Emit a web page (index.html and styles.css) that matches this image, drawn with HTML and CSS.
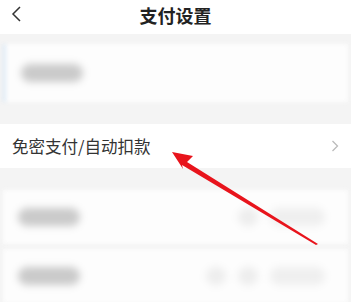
FILE: index.html
```html
<!DOCTYPE html>
<html lang="zh">
<head>
  <meta charset="UTF-8" />
  <meta name="viewport" content="width=device-width, initial-scale=1.0" />
  <title>支付设置</title>
  <link rel="stylesheet" href="styles.css">
</head>
<body>
  <div class="header">
    <svg class="back" width="12" height="16" viewBox="0 0 12 16"><path d="M9 1 L2 8 L9 15" fill="none" stroke="#333" stroke-width="1.5"/></svg>
    <h1>支付设置</h1>
  </div>

  <div class="card blurred first">
    <span class="blob"></span>
  </div>

  <div class="row">
    <span class="label">免密支付/自动扣款</span>
    <svg class="chev" width="8" height="12" viewBox="0 0 8 12"><path d="M1.5 1 L6.5 6 L1.5 11" fill="none" stroke="#bbb" stroke-width="1.3"/></svg>
  </div>

  <div class="card blurred second">
    <span class="blob"></span>
    <span class="spacer"></span>
    <span class="blob small"></span>
    <span class="blob mid"></span>
  </div>

  <div class="card blurred third">
    <span class="blob"></span>
    <span class="spacer"></span>
    <span class="blob small"></span>
    <span class="blob small"></span>
    <span class="blob mid"></span>
  </div>

  <!-- annotation arrow -->
  <svg class="arrow" width="351" height="302" viewBox="0 0 351 302">
    <polygon points="172,152 193,156 187,162 318,244 316,245 182,165 183,169" fill="#e8141c"/>
  </svg>
</body>
</html>
```

FILE: styles.css
```css
body {
  margin: 0;
  font-family: "Noto Sans CJK SC", "Liberation Sans", sans-serif;
  background: #f4f4f4;
  color: #222;
  width: 351px;
  height: 302px;
  overflow: hidden;
  position: relative;
}
.header {
  height: 34px;
  background: white;
  display: flex;
  align-items: center;
  justify-content: center;
  position: relative;
}
.header .back {
  position: absolute;
  left: 11px;
  top: 6px;
}
.header h1 {
  margin: 0;
  font-size: 18px;
  font-weight: bold;
  color: #222;
  line-height: 26px;
  margin-top: -4px;
}
.card {
  background: #fdfdfd;
  display: flex;
  align-items: center;
  padding: 0 15px;
  gap: 12px;
}
.blurred {
  filter: blur(2px);
  margin: 0 3px;
}
.blurred .blob {
  filter: blur(3px);
}
.first {
  margin-top: 10px;
  height: 58px;
  border-left: 3px solid #dbe9f6;
}
.second {
  margin-top: 22px;
  height: 54px;
}
.third {
  margin-top: 5px;
  height: 54px;
}
.blob {
  width: 62px;
  height: 18px;
  background: #cacaca;
  border-radius: 9px;
}
.spacer {
  flex: 1;
}
.blob.small {
  width: 20px;
  background: #ededed;
}
.blob.mid {
  width: 55px;
  background: #efefef;
  margin-right: 8px;
}
.row {
  margin-top: 22px;
  height: 44px;
  background: white;
  display: flex;
  align-items: center;
  justify-content: space-between;
  padding: 0 12px;
}
.row .label {
  font-size: 16.5px;
  color: #333;
}
.arrow {
  position: absolute;
  left: 0;
  top: 0;
}
```
